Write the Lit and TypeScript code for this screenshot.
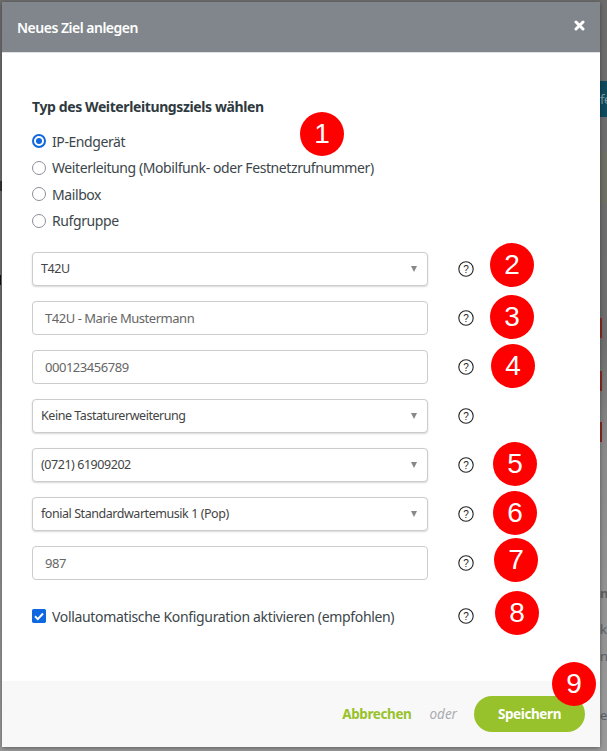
import { LitElement, html, css, svg } from "lit";
import { customElement } from "lit/decorators.js";

const help = svg`<svg class="help" viewBox="0 0 16 16" width="16" height="16"><circle cx="8" cy="8" r="7.2" fill="none" stroke="#222" stroke-width="1.1"/><text x="8" y="11.6" text-anchor="middle" font-size="10" font-family="Liberation Sans, sans-serif" fill="#222">?</text></svg>`;

type Row = { kind: "select" | "input"; text: string; num?: number; left?: number; top?: number };

const rows: Row[] = [
  { kind: "select", text: "T42U", num: 2, left: 458, top: -9 },
  { kind: "input", text: "T42U - Marie Mustermann", num: 3, left: 458, top: -6 },
  { kind: "input", text: "000123456789", num: 4, left: 459, top: -6 },
  { kind: "select", text: "Keine Tastaturerweiterung" },
  { kind: "select", text: "(0721) 61909202", num: 5, left: 461, top: -6 },
  { kind: "select", text: "fonial Standardwartemusik 1 (Pop)", num: 6, left: 461, top: -6 },
  { kind: "input", text: "987", num: 7, left: 462, top: -8 },
];

const backdrop: [string, number, number, number, number, string][] = [
  ["teal", 600, 81, 7, 36, "#0e4a5c"],
  ["olive", 600, 152, 7, 51, "#6e7064"],
  ["red", 600, 318, 2, 20, "#8a2a24"],
  ["red", 600, 371, 2, 20, "#8a2a24"],
  ["red", 600, 422, 2, 20, "#8a2a24"],
  ["mark", 0, 181, 2, 10, "#333"],
  ["mark", 0, 275, 1, 10, "#111"],
];

@customElement("app-root")
export class AppRoot extends LitElement {
  static styles = css`
    :host {
      display: block;
      position: relative;
      width: 607px;
      height: 751px;
      overflow: hidden;
      background: linear-gradient(#6c6c6c 0, #6e6e6e 45%, #8a8a8a 60%, #9a9a9a 100%);
      font-family: "Noto Sans", "Open Sans", sans-serif;
      color: #3c464b;
    }
    .bd {
      position: absolute;
    }
    .bdtext {
      position: absolute;
      left: 600px;
      color: #5d6164;
      font-size: 13px;
      line-height: 16px;
      letter-spacing: -0.4px;
    }
    .modal {
      position: absolute;
      left: 2px;
      top: 2px;
      width: 598px;
      height: 745px;
      background: #fff;
      display: flex;
      flex-direction: column;
      box-shadow: 0 1px 4px rgba(0, 0, 0, 0.4);
      border-radius: 2px;
    }
    .head {
      height: 51px;
      flex: none;
      box-sizing: border-box;
      background: #80868c;
      border-bottom: 1px solid #dfe2e4;
      display: flex;
      align-items: center;
      justify-content: space-between;
      padding: 0 15px 0 15px;
      color: #fff;
      font-size: 14px;
      font-weight: 600;
      letter-spacing: -0.5px;
    }
    .close {
      width: 11px;
      height: 11px;
      margin-bottom: 3px;
    }
    .body {
      flex: 1;
      padding: 44px 0 0 30px;
      display: flex;
      flex-direction: column;
      min-height: 0;
      position: relative;
    }
    h2 {
      margin: 0 0 14px;
      font-size: 14px;
      line-height: 20px;
      font-weight: 700;
      color: #2f3a40;
      letter-spacing: -0.39px;
    }
    .radios {
      display: flex;
      flex-direction: column;
      gap: 6px;
      margin-bottom: 21px;
    }
    .radio {
      display: flex;
      align-items: center;
      gap: 6px;
      height: 20.5px;
      font-size: 14px;
      letter-spacing: -0.41px;
    }
    .dot {
      width: 14px;
      height: 14px;
      box-sizing: border-box;
      border: 1.5px solid #8f8d99;
      border-radius: 50%;
      background: #fff;
      flex: none;
    }
    .dot.on {
      border: 2px solid #0f68e0;
      position: relative;
    }
    .dot.on::after {
      content: "";
      position: absolute;
      inset: 2px;
      border-radius: 50%;
      background: #0f68e0;
    }
    .rows {
      display: flex;
      flex-direction: column;
      gap: 15px;
    }
    .row {
      display: flex;
      align-items: center;
      position: relative;
      height: 34px;
    }
    .field {
      width: 396px;
      height: 34px;
      box-sizing: border-box;
      border: 1px solid #cccccc;
      border-radius: 4px;
      background: #fff;
      display: flex;
      align-items: center;
      justify-content: space-between;
      flex: none;
      font-size: 12.5px;
      letter-spacing: -0.45px;
    }
    .field.select {
      padding: 0 10px 0 8px;
      box-shadow: 0 1px 2px rgba(0, 0, 0, 0.16);
      color: #444;
    }
    .field.select .label {
      padding-bottom: 2px;
    }
    .field.input {
      padding: 0 0 0 12px;
      color: #666;
      font-size: 13px;
      letter-spacing: -0.47px;
    }
    .caret {
      width: 0;
      height: 0;
      border-left: 3.5px solid transparent;
      border-right: 3.5px solid transparent;
      border-top: 6px solid #888;
    }
    .help {
      margin-left: 30px;
      flex: none;
      display: block;
    }
    .num {
      position: absolute;
      width: 44px;
      height: 44px;
      border-radius: 50%;
      background: #fe0000;
      color: #fff;
      font-family: "Liberation Sans", Arial, sans-serif;
      font-size: 28px;
      line-height: 44px;
      text-align: center;
      letter-spacing: 0;
    }
    .check-row {
      margin-top: 19px;
      display: flex;
      align-items: center;
      height: 34px;
      position: relative;
    }
    .check {
      width: 14px;
      height: 14px;
      border-radius: 2px;
      background: #0f68e0;
      flex: none;
      margin-right: 6px;
      display: block;
    }
    .check-label {
      font-size: 14px;
      width: 376px;
      flex: none;
      letter-spacing: -0.33px;
    }
    .foot {
      height: 66px;
      flex: none;
      background: #f8f8f8;
      display: flex;
      align-items: center;
      justify-content: flex-end;
      padding: 0 15px 0 0;
      position: relative;
    }
    .cancel {
      color: #98c22c;
      font-weight: 700;
      font-size: 13.5px;
      letter-spacing: -0.4px;
    }
    .or {
      color: #a8acb0;
      font-style: italic;
      font-size: 13.5px;
      margin: 0 17px 0 18px;
    }
    .save {
      width: 111px;
      height: 36px;
      border-radius: 18px;
      background: #98c22c;
      color: #fff;
      font-weight: 700;
      font-size: 13.5px;
      letter-spacing: -0.4px;
      display: flex;
      align-items: center;
      justify-content: center;
    }
  `;

  private num(n: number, left: number, top: number) {
    return html`<div class="num" style="left:${left}px;top:${top}px">${n}</div>`;
  }

  render() {
    return html`
      ${backdrop.map(
        ([, x, y, w, h, c]) =>
          html`<div class="bd" style="left:${x}px;top:${y}px;width:${w}px;height:${h}px;background:${c}"></div>`
      )}
      <div class="bdtext" style="top:91px;color:#7d9aa6">fe</div>
      <div class="bdtext" style="top:585px;font-weight:700">n!</div>
      <div class="bdtext" style="top:621px">k</div>
      <div class="bdtext" style="top:648px">n</div>
      <div class="bdtext" style="top:707px">e</div>
      <div class="modal">
        <div class="head">
          <span>Neues Ziel anlegen</span>
          <svg class="close" viewBox="0 0 11 11"><path d="M2 2l7 7M9 2l-7 7" stroke="#fff" stroke-width="3" stroke-linecap="round"/></svg>
        </div>
        <div class="body">
          <h2>Typ des Weiterleitungsziels wählen</h2>
          <div class="radios">
            <div class="radio"><span class="dot on"></span>IP-Endgerät</div>
            <div class="radio"><span class="dot"></span>Weiterleitung (Mobilfunk- oder Festnetzrufnummer)</div>
            <div class="radio"><span class="dot"></span>Mailbox</div>
            <div class="radio"><span class="dot"></span>Rufgruppe</div>
          </div>
          ${this.num(1, 298, 59)}
          <div class="rows">
            ${rows.map(
              (r) => html`<div class="row">
                <div class="field ${r.kind}">
                  <span class="label">${r.text}</span>
                  ${r.kind === "select" ? html`<span class="caret"></span>` : ""}
                </div>
                ${help}
                ${r.num ? this.num(r.num, r.left ?? 0, r.top ?? 0) : ""}
              </div>`
            )}
          </div>
          <div class="check-row">
            <svg class="check" viewBox="0 0 14 14"><rect width="14" height="14" rx="2" fill="#0f68e0"/><path d="M3 7.3l2.8 2.8L11 4.5" fill="none" stroke="#fff" stroke-width="2"/></svg>
            <span class="check-label">Vollautomatische Konfiguration aktivieren (empfohlen)</span>
            ${help}
            ${this.num(8, 463, -8)}
          </div>
        </div>
        <div class="foot">
          <span class="cancel">Abbrechen</span>
          <span class="or">oder</span>
          <span class="save">Speichern</span>
          ${this.num(9, 550, -19)}
        </div>
      </div>
    `;
  }
}
